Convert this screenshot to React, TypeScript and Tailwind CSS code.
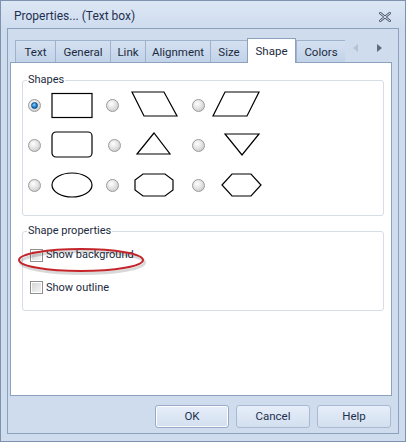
import type { ReactNode } from "react";

// Properties dialog, "Shape" tab open

const TABS = ["Text", "General", "Link", "Alignment", "Size", "Shape", "Colors"];
const TAB_W: Record<string, string> = {
  Text: "w-[40px]",
  General: "w-[55px]",
  Link: "w-[35px]",
  Alignment: "w-[65px]",
  Size: "w-[37px]",
  Shape: "w-[49px]",
  Colors: "w-[49px]",
};

function Radio({ checked = false }: { checked?: boolean }) {
  return (
    <span className="relative flex h-[13px] w-[13px] shrink-0 items-center justify-center rounded-full border border-[#9a9a9a] bg-[radial-gradient(circle_at_40%_35%,#ffffff,#d4d4d4_70%,#bdbdbd)]">
      {checked && (
        <span className="h-[7px] w-[7px] rounded-full border border-[#0b4f8a] bg-[radial-gradient(circle_at_40%_35%,#8fd0ff,#1e7fd0_55%,#0b4f8a)]" />
      )}
    </span>
  );
}

function Checkbox() {
  return (
    <span className="flex h-[13px] w-[13px] shrink-0 items-center justify-center border border-[#8e8f8f] bg-white">
      <span className="h-[9px] w-[9px] bg-[linear-gradient(135deg,#d6d6d6,#f4f4f4)]" />
    </span>
  );
}

function ShapeCell({ children, checked, className }: { children: ReactNode; checked?: boolean; className?: string }) {
  return (
    <div className={`flex h-[40px] items-center gap-[6px] ${className ?? ""}`}>
      <Radio checked={checked} />
      <svg width="56" height="30" viewBox="0 0 56 30" fill="none" stroke="#000" strokeWidth="1.2">
        {children}
      </svg>
    </div>
  );
}

function Group({ title, children, className }: { title: string; children: ReactNode; className?: string }) {
  return (
    <fieldset className={`ml-[11px] mr-[7px] rounded-[3px] border border-[#d5dde6] pl-[4px] ${className ?? ""}`}>
      <legend className="px-[1px] leading-[14px]">{title}</legend>
      {children}
    </fieldset>
  );
}

export default function App() {
  return (
    <div className="relative flex h-[442px] w-[406px] flex-col border border-[#7f92ad] bg-[#cfdcee] font-['Segoe_UI',Roboto,'Liberation_Sans',sans-serif] text-[11px] text-[#1c2a3e]">
      {/* title bar */}
      <div className="flex h-[27px] items-center justify-between bg-[linear-gradient(#dce7f5,#cfdcee)] pl-[13px] pr-[14px] pt-[3px]">
        <span className="text-[12px] text-[#1e3050]">Properties... (Text box)</span>
        <svg width="12" height="10" viewBox="0 0 12 10" className="mt-[2px]">
          <path d="M1 1 L11 9 M11 1 L1 9" stroke="#4a5a70" strokeWidth="2.6" strokeLinecap="square" />
          <path d="M1 1 L11 9 M11 1 L1 9" stroke="#f4f7fb" strokeWidth="0.9" strokeLinecap="square" />
        </svg>
      </div>

      {/* inner frame */}
      <div className="mx-[6px] mb-[7px] flex flex-1 flex-col border border-[#8ca1be]">
        {/* tab strip */}
        <div className="flex h-[33px] items-end pl-[7px] pr-[8px]">
          {TABS.map((t) =>
            t === "Shape" ? (
              <div
                key={t}
                className={`relative z-10 -mb-px flex h-[25px] items-start justify-center border border-b-0 border-[#8ca1be] bg-white pt-[4px] text-[11.5px] ${TAB_W[t]}`}
              >
                {t}
              </div>
            ) : (
              <div
                key={t}
                className={`flex h-[22px] items-center justify-center border border-r-0 border-b-0 border-[#9fb2cb] bg-[linear-gradient(#d3e0f0,#c2d3e9)] pt-[3px] text-[11.5px] last:border-r ${TAB_W[t]}`}
              >
                {t}
              </div>
            )
          )}
          <div className="ml-auto flex h-[24px] items-start gap-[19px] pr-[8px] pt-[6px]">
            <svg width="5" height="8" viewBox="0 0 5 8">
              <path d="M5 0 L0 4 L5 8 Z" fill="#b5c2d3" />
            </svg>
            <svg width="5" height="8" viewBox="0 0 5 8">
              <path d="M0 0 L5 4 L0 8 Z" fill="#5a6b82" />
            </svg>
          </div>
        </div>

        {/* page */}
        <div className="ml-[2px] mr-[6px] flex h-[334px] flex-col border border-[#8ca1be] bg-white pt-[10px]">
          <Group title="Shapes" className="h-[143px]">
            <div className="ml-[1px] mt-[-2px] grid grid-cols-[78px_87px_1fr]">
              <ShapeCell checked>
                <rect x="5" y="3.5" width="40" height="24" />
              </ShapeCell>
              <ShapeCell>
                <polygon points="7,2 39,2 52,26 19,26" />
              </ShapeCell>
              <ShapeCell className="-ml-[1px]">
                <polygon points="14,2 48,2 36,26 2,26" />
              </ShapeCell>

              <ShapeCell>
                <rect x="5" y="2" width="40" height="25" rx="4" />
              </ShapeCell>
              <ShapeCell className="ml-[2px]">
                <polygon points="27,3 10,24 43,24" />
              </ShapeCell>
              <ShapeCell className="-ml-[1px]">
                <polygon points="14,4 48,4 31,25" />
              </ShapeCell>

              <ShapeCell>
                <ellipse cx="25" cy="15" rx="20" ry="12" />
              </ShapeCell>
              <ShapeCell>
                <polygon points="18,4 40,4 48,10 48,20 40,26 18,26 10,20 10,10" />
              </ShapeCell>
              <ShapeCell className="-ml-[1px]">
                <polygon points="11,15 21,4 40,4 50,15 40,26 21,26" />
              </ShapeCell>
            </div>
          </Group>

          <Group title="Shape properties" className="mt-[8px] h-[87px]">
            <div className="ml-[3px] mt-[9px] flex flex-col gap-[16px]">
              <label className="flex items-center gap-[3px]">
                <Checkbox />
                <span>Show background</span>
              </label>
              <label className="flex items-center gap-[3px]">
                <Checkbox />
                <span>Show outline</span>
              </label>
            </div>
          </Group>
        </div>

        {/* buttons */}
        <div className="mt-[9px] flex justify-end gap-[7px] pr-[7px]">
          {["OK", "Cancel", "Help"].map((b) => (
            <button
              key={b}
              className={`h-[23px] w-[74px] rounded-[3px] border bg-[linear-gradient(#e6eef9,#d3dfef)] text-[11.5px] text-[#1e3050] ${
                b === "OK" ? "border-[#97abc6] shadow-[inset_0_0_0_1px_#ffffff]" : "border-[#a9bad0]"
              }`}
            >
              {b}
            </button>
          ))}
        </div>
      </div>

      {/* red marker round the background option */}
      <svg className="pointer-events-none absolute left-[16px] top-[246px]" width="132" height="28" viewBox="0 0 132 28">
        <ellipse cx="64" cy="14" rx="62" ry="11" fill="none" stroke="#000" strokeOpacity="0.15" strokeWidth="3" transform="translate(1.5 1.5)" />
        <ellipse cx="64" cy="13" rx="62" ry="11" fill="none" stroke="#c4252b" strokeWidth="2" />
      </svg>
    </div>
  );
}
